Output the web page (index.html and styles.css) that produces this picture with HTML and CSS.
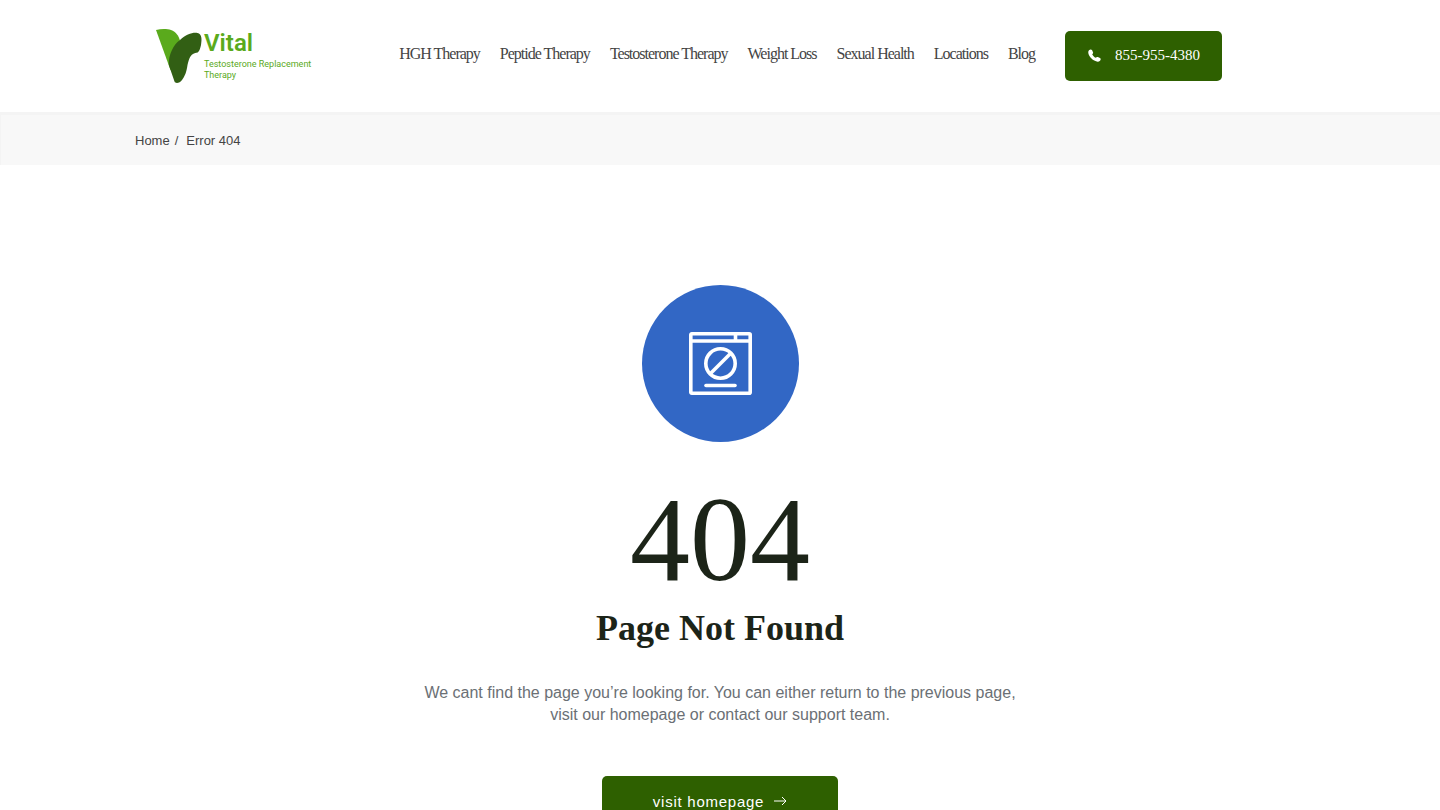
FILE: index.html
```html
<!DOCTYPE html>
<html lang="en">
<head>
    <meta charset="utf-8">
    <meta name="viewport" content="width=device-width, initial-scale=1">
    <title>Page Not Found</title>
    <link rel="stylesheet" href="styles.css">
</head>
<body>
    <header class="site-header">
        <a href="#" class="logo">
            <svg class="logo-mark" width="48" height="56" viewBox="0 0 48 56" aria-hidden="true">
                <path fill="#5aaa1c" d="M1 2C6 0.6 12 0.6 16 2C21 4 24 8 25 13L20 40L15.5 42Z"/>
                <path fill="#325f14" d="M19.5 53.5L13.8 37C13.500 27 18 17 25 12C31 6.5 38 4 42.5 5C47 6 47 11 46 17C45.3 20.5 44 24 42.5 24.5C36 25 34 30 32.5 37C31.5 44 30 48 27 52C25 55 20.5 56 19.5 53.5Z"/>
            </svg>
            <span class="logo-text">
                <span class="logo-name">Vital</span>
                <span class="logo-tagline">Testosterone Replacement Therapy</span>
            </span>
        </a>
        <nav class="main-nav">
            <a href="#">HGH Therapy</a>
            <a href="#">Peptide Therapy</a>
            <a href="#">Testosterone Therapy</a>
            <a href="#">Weight Loss</a>
            <a href="#">Sexual Health</a>
            <a href="#">Locations</a>
            <a href="#">Blog</a>
        </nav>
        <a href="tel:8559554380" class="phone-button">
            <svg width="13" height="13" viewBox="0 0 13 13" aria-hidden="true">
                <path fill="#fff" d="M1 1.2C2 .2 3.3.1 4 1L5 3.2C5.3 4 5 4.6 4.2 5.2C4.9 6.8 6.1 8 7.8 8.8C8.4 8 9 7.7 9.8 8L12 9C12.9 9.6 12.9 10.8 12 11.8C10.8 13.1 8.6 13.1 6.3 11.6C4.3 10.4 2.5 8.6 1.3 6.7C.1 4.5-.2 2.5 1 1.2Z"/>
            </svg>
            <span>855-955-4380</span>
        </a>
    </header>

    <nav class="breadcrumb" aria-label="Breadcrumb">
        <a href="#">Home</a>
        <span>/</span>
        <span class="current">Error 404</span>
    </nav>

    <main class="error-page">
        <div class="error-icon">
            <svg width="63" height="63" viewBox="0 0 63 63" fill="none" stroke="#fff" stroke-width="3.6" aria-hidden="true">
                <rect x="1.8" y="1.8" width="59.4" height="59.4" rx="1"/>
                <path d="M2 9H61M46.5 2V9"/>
                <circle cx="31.5" cy="31.5" r="14.7"/>
                <path d="M21.5 41.5L41.5 21.5"/>
                <path d="M17 53.5H46" stroke-linecap="round"/>
            </svg>
        </div>
        <h1 class="error-code">404</h1>
        <h2 class="error-title">Page Not Found</h2>
        <p class="error-text">We cant find the page you’re looking for. You can either return to the previous page, visit our homepage or contact our support team.</p>
        <a href="#" class="home-button">
            <span>visit homepage</span>
            <svg width="13" height="10" viewBox="0 0 13 10" fill="none" stroke="#fff" aria-hidden="true">
                <path d="M0 5H12M8 1L12 5L8 9"/>
            </svg>
        </a>
    </main>
</body>
</html>
```
FILE: styles.css
```css
* {
    box-sizing: border-box;
}
body {
    margin: 0;
    font-family: "Liberation Sans", Arial, sans-serif;
    color: #444;
    background-color: #fff;
}
a {
    color: inherit;
    text-decoration: none;
}
.site-header {
    display: flex;
    align-items: center;
    max-width: 1130px;
    height: 112px;
    margin: 0 auto;
}
.logo {
    display: flex;
    align-items: flex-start;
    width: 160px;
    color: #5aaa1c;
    font-family: Roboto, sans-serif;
}
.logo-mark {
    flex-shrink: 0;
    margin-right: 1px;
}
.logo-text {
    display: flex;
    flex-direction: column;
    gap: 1px;
}
.logo-name {
    font-size: 24px;
    font-weight: 600;
    line-height: 30px;
}
.logo-tagline {
    font-size: 9px;
    line-height: 11px;
}
.main-nav {
    display: flex;
    gap: 20px;
    margin-left: auto;
    padding-bottom: 4px;
    font-family: "Liberation Serif", "Times New Roman", serif;
    font-size: 16px;
    letter-spacing: -1px;
    white-space: nowrap;
}
.phone-button {
    display: flex;
    align-items: center;
    gap: 14px;
    height: 50px;
    margin-right: 63px;
    margin-left: 30px;
    padding: 0 22px 2px 23px;
    border-radius: 5px;
    background-color: #2e6000;
    color: #fff;
    font-family: "Liberation Serif", "Times New Roman", serif;
    font-size: 15px;
}
.breadcrumb {
    display: flex;
    gap: 5px;
    padding: 18px 134px 16px;
    border: 1px solid #f4f4f4;
    border-top-width: 3px;
    border-right: 0;
    border-bottom: 0;
    background-color: #f8f8f8;
    font-size: 13px;
    line-height: 16px;
}
.breadcrumb .current {
    margin-left: 3px;
}
.error-page {
    display: flex;
    flex-direction: column;
    align-items: center;
    padding: 120px 20px;
    text-align: center;
}
.error-icon {
    display: flex;
    align-items: center;
    justify-content: center;
    width: 157px;
    height: 157px;
    border-radius: 50%;
    background-color: #3267c5;
}
.error-code {
    margin: 38px 0 0;
    color: #1c2418;
    font-family: "Liberation Serif", "Times New Roman", serif;
    font-size: 120px;
    font-weight: 400;
    line-height: 120px;
}
.error-title {
    margin: 6px 0 0;
    color: #1c2418;
    font-family: "Liberation Serif", "Times New Roman", serif;
    font-size: 36px;
    font-weight: 700;
    line-height: 44px;
}
.error-text {
    max-width: 600px;
    margin: 32px 0 0;
    color: #6b7075;
    font-size: 16px;
    line-height: 22px;
}
.home-button {
    display: flex;
    align-items: center;
    justify-content: center;
    gap: 10px;
    width: 236px;
    height: 50px;
    margin-top: 50px;
    border-radius: 5px;
    background-color: #2e6000;
    color: #fff;
    font-size: 15px;
    letter-spacing: 0.05em;
}
```
